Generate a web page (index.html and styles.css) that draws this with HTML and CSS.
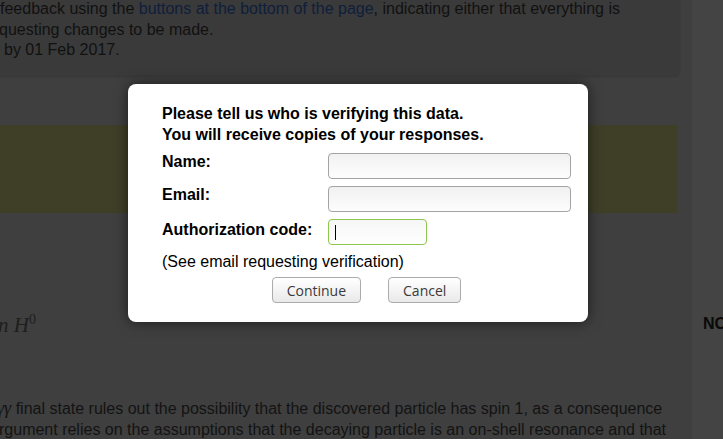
FILE: index.html
```html
<!DOCTYPE html>
<html>
<head>
<meta charset="utf-8">
<link rel="stylesheet" href="styles.css">
</head>
<body>
<div class="page">
  <div class="main">
    <div class="notice">
      <div class="line l1">feedback using the <a class="link">buttons at the bottom of the page</a>, indicating either that everything is</div>
      <div class="line l2">questing changes to be made.</div>
      <div class="line l3">by 01 Feb 2017.</div>
    </div>
    <div class="highlight"></div>
    <div class="math-head"><span class="n">n</span> H<sup>0</sup></div>
    <div class="para">
      <div class="line p1"><i class="gg">γγ</i> final state rules out the possibility that the discovered particle has spin 1, as a consequence</div>
      <div class="line p2">rgument relies on the assumptions that the decaying particle is an on-shell resonance and that</div>
    </div>
  </div>
  <div class="sidebar"><b>NO</b></div>
</div>

<div class="overlay">
  <div class="modal">
    <div class="intro">Please tell us who is verifying this data.<br>You will receive copies of your responses.</div>
    <div class="form">
      <label class="lbl">Name:</label>
      <div class="field wide"></div>
      <label class="lbl">Email:</label>
      <div class="field wide"></div>
      <label class="lbl auth">Authorization code:</label>
      <div class="field short focus"><span class="caret"></span></div>
    </div>
    <div class="hint">(See email requesting verification)</div>
    <div class="actions">
      <button class="btn">Continue</button>
      <button class="btn">Cancel</button>
    </div>
  </div>
</div>
</body>
</html>
```

FILE: styles.css
```css
html, body {
  margin: 0;
  padding: 0;
}
body {
  width: 723px;
  height: 439px;
  overflow: hidden;
  background: #3f3f3f;
  font-family: "Liberation Sans", Arial, sans-serif;
  font-size: 16px;
  color: #111;
  position: relative;
}
.page {
  display: flex;
  height: 439px;
}
.main {
  width: 692px;
  flex: none;
}
.sidebar {
  flex: 1;
  background: #444444;
  padding: 313px 0 0 11px;
  line-height: 21px;
  white-space: nowrap;
  overflow: hidden;
  color: #0a0a0a;
}
.line {
  white-space: nowrap;
  line-height: 20.5px;
}
.notice {
  margin: -1px 0 0 -30px;
  width: 710px;
  padding: 0 0 16px 30px;
  box-sizing: border-box;
  background: #3a3a3a;
  border-bottom-right-radius: 6px;
  box-shadow: 0 1px 2px rgba(0,0,0,0.15);
  height: 77px;
}
.link {
  color: #0f1e3b;
}
.l2 { margin-left: -1px; }
.l3 { margin-left: 4px; }
.highlight {
  margin-top: 49px;
  width: 677px;
  height: 88px;
  background: #3f3f28;
}
.math-head {
  margin-top: 99px;
  font-family: "Liberation Serif", "Times New Roman", serif;
  font-style: italic;
  font-size: 21px;
  line-height: 26px;
  color: #1e1e1e;
  white-space: nowrap;
}
.math-head .n {
  margin-left: -2px;
}
.math-head sup {
  font-size: 14px;
  line-height: 0;
  font-style: normal;
}
.para {
  margin-top: 60px;
  color: #131313;
}
.para .line {
  line-height: 21px;
}
.gg {
  font-family: "Liberation Serif", serif;
  font-size: 18px;
  margin-left: -3px;
}
.p2 { margin-left: -1px; }

.overlay {
  position: absolute;
  inset: 0;
}
.modal {
  position: absolute;
  left: 128px;
  top: 84px;
  width: 460px;
  height: 238px;
  box-sizing: border-box;
  padding: 19px 17px 0 34px;
  background: #fff;
  border-radius: 8px;
  box-shadow: 0 0 14px rgba(0,0,0,0.55);
  color: #000;
}
.intro {
  font-weight: bold;
  line-height: 21px;
}
.form {
  display: grid;
  grid-template-columns: 166px 1fr;
  grid-auto-rows: 28px;
  row-gap: 5px;
  margin-top: 6px;
}
.lbl {
  font-weight: bold;
  line-height: 21px;
}
.lbl.auth {
  margin-top: 2px;
}
.field {
  margin-top: 2px;
  height: 26px;
  box-sizing: border-box;
  border: 1px solid #a3a3a3;
  border-radius: 4px;
  background: linear-gradient(#f1f1f1, #fdfdfd);
  position: relative;
}
.field.wide { width: 243px; }
.field.short { width: 99px; }
.field.focus {
  border-color: #8fc653;
  background: linear-gradient(#f6f6f6, #ffffff);
}
.caret {
  position: absolute;
  left: 6px;
  top: 5px;
  width: 1px;
  height: 15px;
  background: #000;
}
.hint {
  margin-top: 6px;
  line-height: 21px;
}
.actions {
  display: flex;
  justify-content: center;
  gap: 27px;
  width: 409px;
  margin-top: 5px;
}
.btn {
  height: 26px;
  padding: 0 14px;
  font-family: "Open Sans", "DejaVu Sans", sans-serif;
  font-size: 14px;
  color: #3a3a3a;
  background: linear-gradient(#ffffff, #e9e9e9);
  border: 1px solid #ababab;
  border-radius: 4px;
}
```
